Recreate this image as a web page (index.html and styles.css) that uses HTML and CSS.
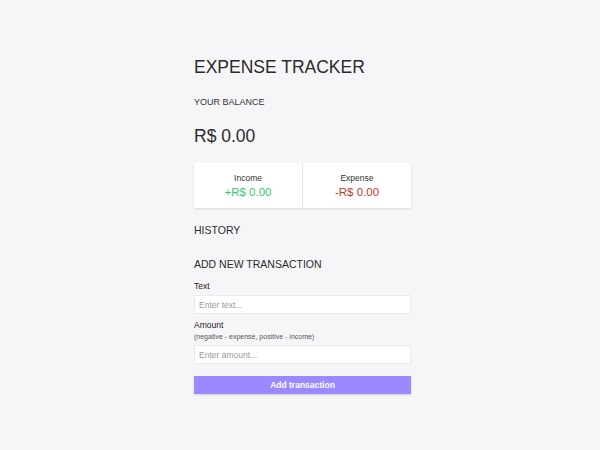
FILE: index.html
```html
<!DOCTYPE html>
<html lang="en">
<head>
<meta charset="utf-8">
<title>Expense Tracker</title>
<link rel="stylesheet" href="styles.css">
</head>
<body>
<div class="container">
  <h2 class="title">EXPENSE TRACKER</h2>
  <h4 class="balance-label">YOUR BALANCE</h4>
  <h1 class="balance">R$ 0.00</h1>
  <div class="inc-exp">
    <div class="box">
      <div class="box-label">Income</div>
      <div class="money plus">+R$ 0.00</div>
    </div>
    <div class="box">
      <div class="box-label">Expense</div>
      <div class="money minus">-R$ 0.00</div>
    </div>
  </div>
  <h3 class="section">HISTORY</h3>
  <ul class="list"></ul>
  <h3 class="section add">ADD NEW TRANSACTION</h3>
  <form class="form">
    <div class="control">
      <label class="label">Text</label>
      <input class="input" type="text" placeholder="Enter text...">
    </div>
    <div class="control">
      <label class="label">Amount</label>
      <span class="hint">(negative - expense, positive - income)</span>
      <input class="input" type="number" placeholder="Enter amount...">
    </div>
    <button class="btn" type="button">Add transaction</button>
  </form>
</div>
</body>
</html>
```
FILE: styles.css
```css
* { box-sizing: border-box; }
body {
  margin: 0;
  padding-left: 5px;
  background: #f6f5f8;
  font-family: "Liberation Sans", Arial, sans-serif;
  color: #2b2b2b;
  height: 450px;
}
.container {
  width: 217px;
  margin: 0 auto;
  padding-top: 57px;
}
.title {
  margin: 0;
  font-size: 17.5px;
  font-weight: normal;
  line-height: 20px;
}
.balance-label {
  margin: 20px 0 0;
  font-size: 9px;
  font-weight: normal;
  line-height: 10px;
  color: #333;
}
.balance {
  margin: 19px 0 0;
  font-size: 17.5px;
  font-weight: normal;
  line-height: 20px;
}
.inc-exp {
  margin-top: 17px;
  background: #fff;
  display: flex;
  box-shadow: 0 1px 2px rgba(0,0,0,0.12);
  height: 45px;
}
.box {
  flex: 1;
  display: flex;
  flex-direction: column;
  align-items: center;
  padding-top: 10px;
}
.box:first-child { border-right: 1px solid #e8e8e8; }
.box-label {
  font-size: 8.5px;
  line-height: 11px;
  color: #333;
}
.money {
  font-size: 11.5px;
  line-height: 14px;
  margin-top: 1px;
}
.plus { color: #2ecc71; }
.minus { color: #c0392b; }
.section {
  margin: 16px 0 0;
  font-size: 10.5px;
  font-weight: normal;
  line-height: 13px;
  color: #2b2b2b;
}
.list { margin: 0; padding: 0; list-style: none; height: 21px; }
.add { margin-top: 0; }
.form { margin-top: 10px; }
.control { margin-bottom: 6px; }
.label {
  display: block;
  font-size: 8.5px;
  line-height: 11px;
  color: #222;
  margin-bottom: 3px;
}
.hint {
  display: block;
  margin-top: -2px;
  margin-bottom: 3px;
  font-size: 7px;
  line-height: 10px;
  color: #555;
}
.input {
  display: block;
  width: 100%;
  height: 19px;
  border: 1px solid #eaeaea;
  background: #fff;
  padding: 0 4px;
  font-size: 8.5px;
  font-family: "Liberation Sans", Arial, sans-serif;
  color: #333;
  outline: none;
}
.input::placeholder { color: #999; }
.btn {
  display: block;
  width: 100%;
  height: 18px;
  margin-top: 12px;
  background: #9c88ff;
  border: none;
  color: #fff;
  font-weight: bold;
  font-size: 8.5px;
  font-family: "Liberation Sans", Arial, sans-serif;
  box-shadow: 0 1px 2px rgba(0,0,0,0.15);
}
```
